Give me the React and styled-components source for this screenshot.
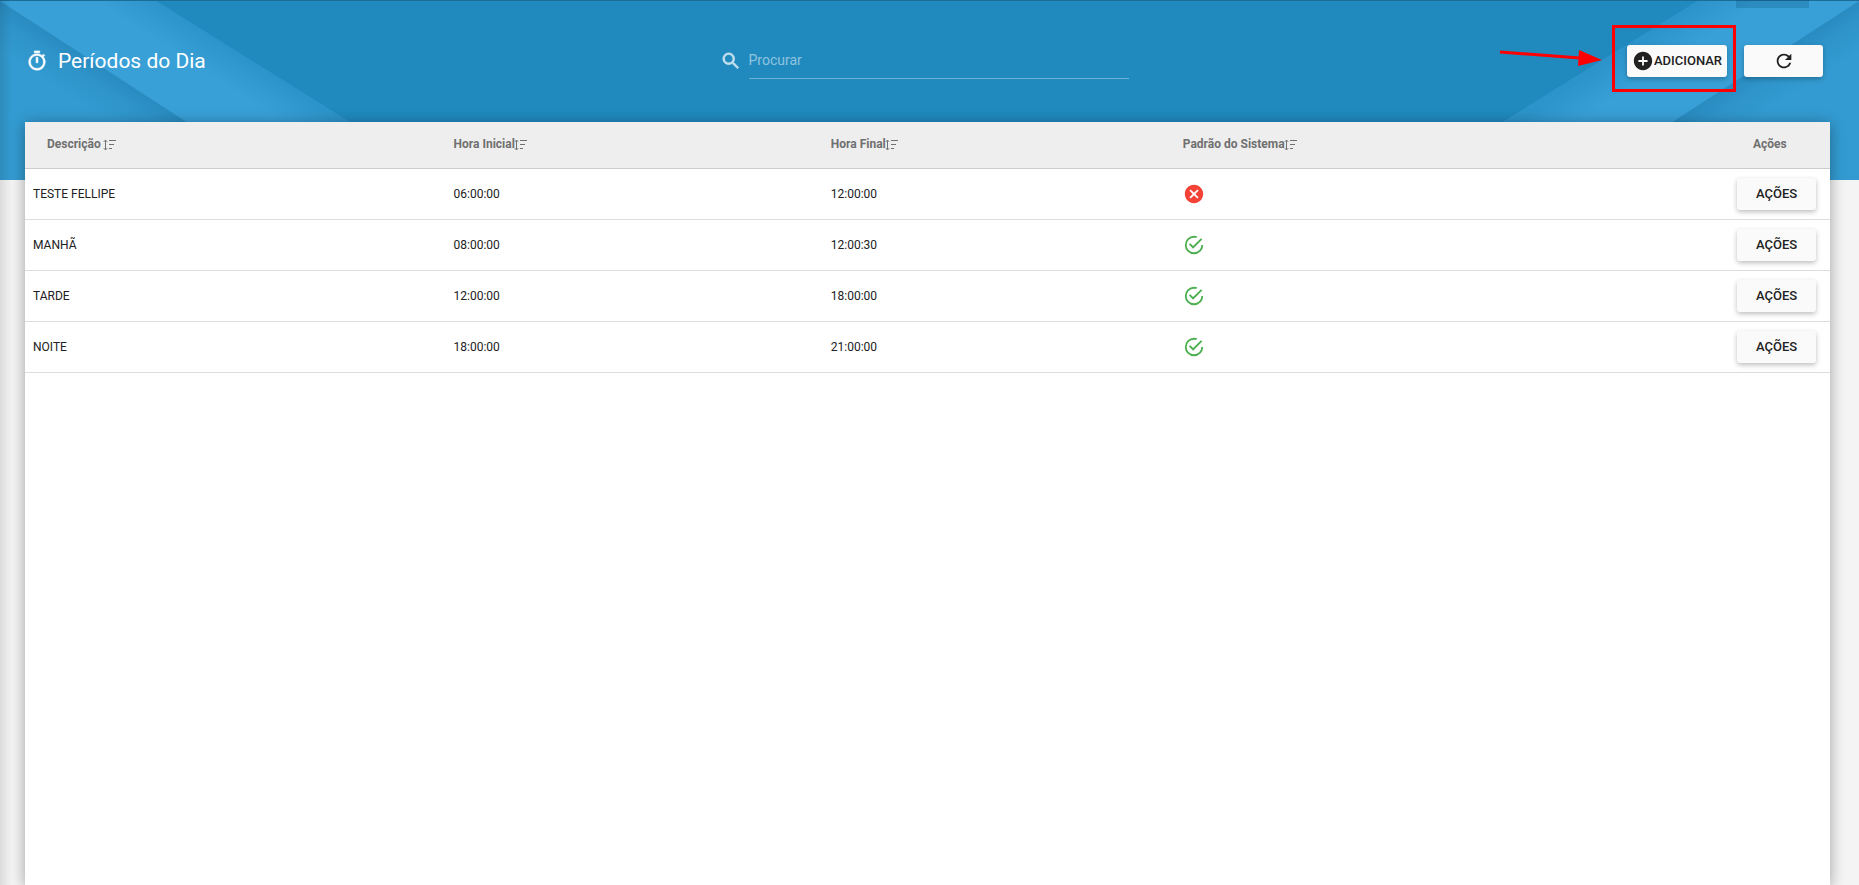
import React, { useState } from 'react'
import styled, { createGlobalStyle } from 'styled-components'
import { MdAddCircle, MdCancel, MdOutlineTimer, MdRefresh, MdSearch } from 'react-icons/md'

const periods = [
  { id: 1, description: 'TESTE FELLIPE', start: '06:00:00', end: '12:00:00', system: false },
  { id: 2, description: 'MANHÃ', start: '08:00:00', end: '12:00:30', system: true },
  { id: 3, description: 'TARDE', start: '12:00:00', end: '18:00:00', system: true },
  { id: 4, description: 'NOITE', start: '18:00:00', end: '21:00:00', system: true },
]

function SortIcon() {
  return (
    <svg width="14" height="12" viewBox="0 0 14 12" fill="none" stroke="currentColor" aria-hidden="true">
      <path d="M2.5 1.5v9M0.8 2.8L2.5 1l1.7 1.8M0.8 9.2L2.5 11l1.7-1.8" />
      <path d="M6 1.5h7M6 5.5h5M6 9.5h3" strokeWidth="1.2" />
    </svg>
  )
}

function CheckIcon() {
  return (
    <svg width="22" height="22" viewBox="0 0 24 24" fill="currentColor" aria-hidden="true">
      <path d="M20 12a8 8 0 0 1-8 8 8 8 0 0 1-8-8 8 8 0 0 1 8-8c.76 0 1.5.11 2.2.31l1.57-1.57A9.82 9.82 0 0 0 12 2 10 10 0 0 0 2 12a10 10 0 0 0 10 10 10 10 0 0 0 10-10M7.91 10.08L6.5 11.5 11 16 21 6l-1.41-1.42L11 13.17z" />
    </svg>
  )
}

function Ribbon({ id, top, bottom }) {
  return (
    <svg width="460" height="180" viewBox="0 0 460 180" aria-hidden="true">
      <defs>
        <linearGradient id={`${id}-band`} gradientUnits="userSpaceOnUse" x1="100" y1="65" x2="146" y2="-6">
          <stop offset="0" stopColor="#38a0d7" />
          <stop offset="0.6" stopColor="#38a0d7" />
          <stop offset="1" stopColor="#2c94ca" />
        </linearGradient>
        <linearGradient id={`${id}-corner`} gradientUnits="userSpaceOnUse" x1="94" y1="61" x2="70" y2="98">
          <stop offset="0" stopColor="#298bc0" />
          <stop offset="0.4" stopColor="#2e94ca" />
          <stop offset="1" stopColor="#339bd1" />
        </linearGradient>
      </defs>
      <path d={`M0 0H${top}L${bottom} 180H0z`} fill={`url(#${id}-band)`} />
      <path d="M0 1L276 180H0z" fill={`url(#${id}-corner)`} />
    </svg>
  )
}

export default function App() {
  const [search, setSearch] = useState('')

  const rows = periods.filter((p) => p.description.toLowerCase().includes(search.toLowerCase()))

  return (
    <Page>
      <GlobalStyle />
      <Backdrop>
        <Ribbon id="left" top={155} bottom={443} />
        <Mirror>
          <Ribbon id="right" top={160} bottom={450} />
        </Mirror>
      </Backdrop>
      <Tab />
      <Toolbar>
        <Title>
          <MdOutlineTimer size={22} />
          <h1>Períodos do Dia</h1>
        </Title>
        <Search>
          <MdSearch size={22} />
          <input
            type="text"
            aria-label="Procurar"
            placeholder="Procurar"
            value={search}
            onChange={(e) => setSearch(e.target.value)}
          />
        </Search>
        <Actions>
          <Marked>
            <Button $wide>
              <MdAddCircle size={22} />
              ADICIONAR
            </Button>
            <Highlight />
            <Arrow width="106" height="20" viewBox="0 0 106 20" aria-hidden="true">
              <path d="M2 3L82 9" stroke="#f00" strokeWidth="3" />
              <path d="M81 1L104 11L80 17z" fill="#f00" />
            </Arrow>
          </Marked>
          <Button aria-label="Atualizar">
            <MdRefresh size={22} />
          </Button>
        </Actions>
      </Toolbar>
      <Card>
        <Table>
          <colgroup>
            <Col $width="23.3%" />
            <Col $width="20.9%" />
            <Col $width="19.5%" />
            <Col />
            <Col $width="101px" />
          </colgroup>
          <thead>
            <tr>
              <Th $indent="22px">Descrição <SortIcon /></Th>
              <Th>Hora Inicial<SortIcon /></Th>
              <Th>Hora Final<SortIcon /></Th>
              <Th>Padrão do Sistema<SortIcon /></Th>
              <Th $indent="24px">Ações</Th>
            </tr>
          </thead>
          <tbody>
            {rows.map((p) => (
              <tr key={p.id}>
                <Td>{p.description}</Td>
                <Td>{p.start}</Td>
                <Td>{p.end}</Td>
                <Td>
                  <Status $ok={p.system}>
                    {p.system ? <CheckIcon /> : <MdCancel size={22} />}
                  </Status>
                </Td>
                <Td>
                  <Button>AÇÕES</Button>
                </Td>
              </tr>
            ))}
          </tbody>
        </Table>
      </Card>
    </Page>
  )
}

const GlobalStyle = createGlobalStyle`
  * {
    box-sizing: border-box;
  }
  body {
    margin: 0;
    background: #f4f4f4;
    color: #212121;
    font-family: Roboto, "Liberation Sans", sans-serif;
    font-size: 12px;
  }
`

const Page = styled.div`
  position: relative;
  display: flex;
  flex-direction: column;
  min-height: 100vh;
  overflow: hidden;
  isolation: isolate;
  &::before {
    content: '';
    position: absolute;
    inset: 0 auto 0 0;
    width: 12px;
    background: linear-gradient(to right, rgba(0, 0, 0, 0.1), transparent);
  }
`

const Backdrop = styled.div`
  position: absolute;
  inset: 0 0 auto 0;
  z-index: -1;
  display: flex;
  justify-content: space-between;
  height: 180px;
  overflow: hidden;
  background: #2089be;
  &::after {
    content: '';
    position: absolute;
    inset: 0 0 auto 0;
    height: 1px;
    background: #1b6d98;
  }
`

const Mirror = styled.div`
  transform: scaleX(-1);
`

const Tab = styled.div`
  position: absolute;
  top: 0;
  right: 50px;
  width: 73px;
  height: 8px;
  background: rgba(0, 60, 100, 0.2);
`

const Toolbar = styled.header`
  display: grid;
  grid-template-columns: 1fr minmax(0, 408px) 1fr;
  align-items: center;
  height: 122px;
  padding: 0 36px 0 26px;
`

const Title = styled.div`
  display: flex;
  align-items: center;
  gap: 10px;
  color: #fff;
  path:not([fill='none']) {
    stroke: #fff;
    stroke-width: 0.6px;
  }
  h1 {
    margin: 0;
    font-size: 21px;
    font-weight: 400;
    line-height: 28px;
  }
`

const Search = styled.label`
  display: flex;
  align-items: center;
  gap: 7px;
  color: rgba(255, 255, 255, 0.7);
  svg {
    flex: none;
    margin-left: -1px;
  }
  path:not([fill='none']) {
    stroke: currentColor;
    stroke-width: 0.6px;
  }
  input {
    flex: 1;
    min-width: 0;
    height: 36px;
    padding: 0 0 2px;
    border: 0;
    border-bottom: 1px solid rgba(255, 255, 255, 0.35);
    outline: 0;
    background: transparent;
    color: #fff;
    font-family: inherit;
    font-size: 14px;
  }
  input::placeholder {
    color: rgba(255, 255, 255, 0.5);
  }
`

const Actions = styled.div`
  display: flex;
  justify-content: flex-end;
  gap: 17px;
`

const Button = styled.button`
  display: flex;
  align-items: center;
  justify-content: center;
  width: ${(props) => (props.$wide ? '100px' : '79px')};
  height: 32px;
  padding: 0 0 1px;
  border: 0;
  border-radius: 3px;
  background: #fafafa;
  box-shadow: 0 2px 5px rgba(0, 0, 0, 0.26);
  color: #212121;
  font-family: inherit;
  font-size: 13px;
  font-weight: 500;
  cursor: pointer;
`

const Marked = styled.div`
  position: relative;
`

const Highlight = styled.div`
  position: absolute;
  inset: -20px -9px -15px -15px;
  border: 3px solid #f00;
  pointer-events: none;
`

const Arrow = styled.svg`
  position: absolute;
  top: 4px;
  right: 123px;
`

const Card = styled.main`
  flex: 1;
  margin: 0 29px 0 25px;
  background: #fff;
  box-shadow: 0 2px 14px rgba(0, 0, 0, 0.35);
`

const Table = styled.table`
  width: 100%;
  table-layout: fixed;
  border-collapse: separate;
  border-spacing: 0;
`

const Col = styled.col`
  width: ${(props) => props.$width || 'auto'};
`

const Th = styled.th`
  height: 47px;
  padding: 0 0 3px ${(props) => props.$indent || '8px'};
  border-bottom: 1px solid #ccc;
  background: #eee;
  color: #707070;
  font-weight: 700;
  text-align: left;
  white-space: nowrap;
  svg {
    margin-left: -1px;
    vertical-align: -3px;
  }
`

const Td = styled.td`
  height: 51px;
  padding: 0 0 1px 8px;
  border-bottom: 1px solid #ddd;
`

const Status = styled.span`
  display: flex;
  color: ${(props) => (props.$ok ? '#4caf50' : '#f44336')};
`
